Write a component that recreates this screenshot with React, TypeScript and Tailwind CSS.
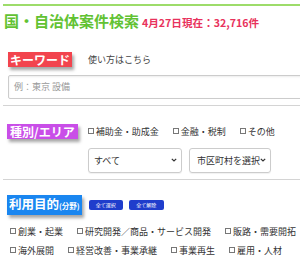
import React from "react";

const Box = () => (
  <span className="inline-block w-[6px] h-[6px] border border-[#777] mr-[2px] shrink-0" />
);

const Check = ({ label }: { label: string }) => (
  <span className="inline-flex items-center whitespace-nowrap">
    <Box />
    {label}
  </span>
);

const Chevron = () => (
  <svg width="6" height="4" viewBox="0 0 6 4" className="shrink-0">
    <path d="M0.8 0.8 L3 3 L5.2 0.8" fill="none" stroke="#333" strokeWidth="1.2" />
  </svg>
);

export default function App() {
  const purposes = [
    "創業・起業",
    "研究開発／商品・サービス開発",
    "販路・需要開拓",
    "海外展開",
    "経営改善・事業承継",
    "事業再生",
    "雇用・人材",
  ];
  return (
    <div
      className="w-[300px] h-[263px] overflow-hidden bg-white text-[#333]"
      style={{ fontFamily: '"Noto Sans CJK JP", "Noto Sans", sans-serif' }}
    >
      <div className="ml-[3px]">
        <div className="mt-[4px] h-[2px] bg-[#9ddc6a]" />
        <div className="mt-[6px] flex items-baseline ml-[1px] whitespace-nowrap">
          <span className="text-[15px] leading-[18px] font-bold text-[#62c233]">国・自治体案件検索</span>
          <span className="ml-[3px] text-[10.6px] font-bold text-[#e8325c]">4月27日現在：32,716件</span>
        </div>

        <div className="mt-[21px] flex items-center h-[15px]">
          <span className="ml-[5px] bg-[#f2444e] text-white font-bold text-[12px] leading-[15px] px-[2px] shadow-[2px_3px_3px_rgba(0,0,0,0.35)]">
            キーワード
          </span>
          <span className="ml-[16px] text-[9px] text-[#444]">使い方はこちら</span>
        </div>
        <div className="mt-[8px] ml-[5px] w-[300px] h-[24px] border border-[#ccc] rounded-[2px] flex items-center pl-[5px] text-[9px] text-[#999] shadow-[inset_0_1px_2px_rgba(0,0,0,0.08)]">
          例：東京 設備
        </div>
        <div className="mt-[6px] border-t border-[#d4d4d4]" />

        <div className="mt-[18px] flex items-center h-[15px]">
          <span className="ml-[4px] bg-[#c94ee8] text-white font-bold text-[12px] leading-[15px] px-[3px] shadow-[2px_3px_3px_rgba(0,0,0,0.35)]">
            種別/エリア
          </span>
          <div className="ml-[10px] flex gap-x-[14px] text-[9px] text-[#333]">
            <Check label="補助金・助成金" />
            <Check label="金融・税制" />
            <Check label="その他" />
          </div>
        </div>
        <div className="mt-[9px] ml-[85px] flex gap-[7px]">
          <div className="w-[94px] h-[25px] border border-[#ccc] rounded-[3px] flex items-center justify-between pl-[5px] pr-[4px] text-[9px] text-[#333] shadow-[0_1px_1px_rgba(0,0,0,0.06)]">
            すべて
            <Chevron />
          </div>
          <div className="w-[82px] h-[25px] border border-[#ccc] rounded-[3px] flex items-center justify-between pl-[7px] pr-[4px] text-[9px] text-[#333] shadow-[0_1px_1px_rgba(0,0,0,0.06)]">
            市区町村を選択
            <Chevron />
          </div>
        </div>
        <div className="mt-[6px] border-t border-[#d4d4d4]" />

        <div className="mt-[16px] flex items-center h-[18px]">
          <span className="ml-[4px] bg-[#1a86f0] text-white font-bold text-[12.5px] leading-[18px] px-[2px] shadow-[2px_3px_3px_rgba(0,0,0,0.35)] whitespace-nowrap">
            利用目的<span className="text-[7.5px]">(分野)</span>
          </span>
          <span className="ml-[7px] w-[34px] h-[10px] rounded-[2px] bg-[#1f3dcc] text-white text-[5px] flex items-center justify-center">
            全て選択
          </span>
          <span className="ml-[6px] w-[35px] h-[10px] rounded-[2px] bg-[#1f3dcc] text-white text-[5px] flex items-center justify-center">
            全て解除
          </span>
        </div>
        <div className="mt-[11px] ml-[7px] w-[292px] flex flex-wrap gap-x-[14px] gap-y-[6px] text-[9px] leading-[13px] text-[#333]">
          {purposes.map((p) => (
            <Check key={p} label={p} />
          ))}
        </div>
      </div>
    </div>
  );
}
